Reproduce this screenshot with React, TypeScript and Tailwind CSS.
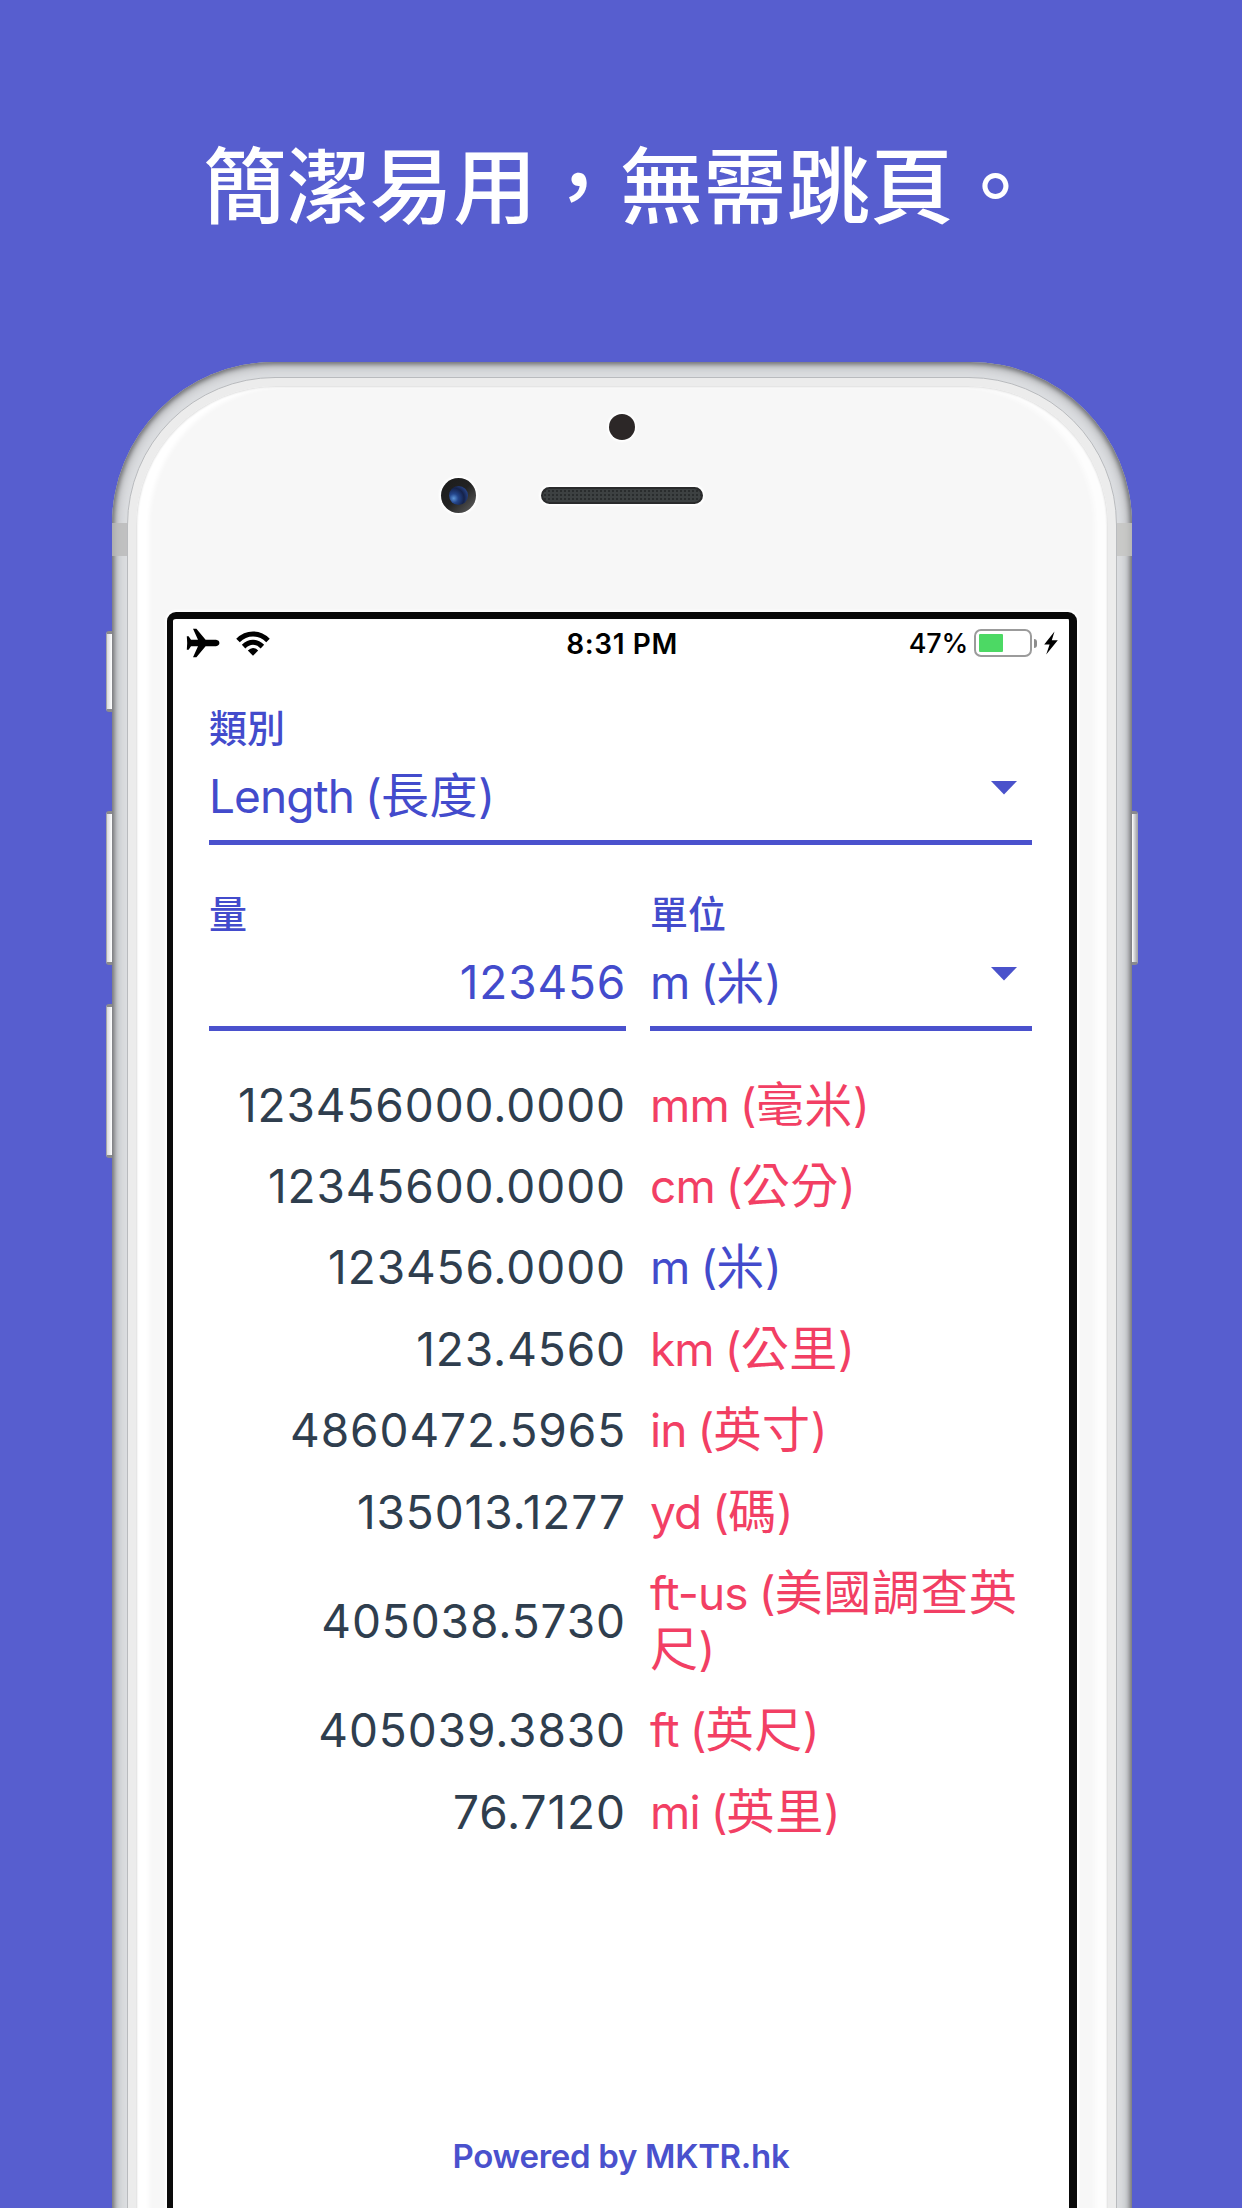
import React from "react";

const UI = "font-['Inter','Noto_Sans_CJK_TC',sans-serif]";

type Row = { value: string; unit: string; name: string; active?: boolean };

const rows: Row[] = [
  { value: "123456000.0000", unit: "mm", name: "毫米" },
  { value: "12345600.0000", unit: "cm", name: "公分" },
  { value: "123456.0000", unit: "m", name: "米", active: true },
  { value: "123.4560", unit: "km", name: "公里" },
  { value: "4860472.5965", unit: "in", name: "英寸" },
  { value: "135013.1277", unit: "yd", name: "碼" },
  { value: "405038.5730", unit: "ft-us", name: "美國調查英尺" },
  { value: "405039.3830", unit: "ft", name: "英尺" },
  { value: "76.7120", unit: "mi", name: "英里" },
];

function UnitName({ unit, name }: { unit: string; name: string }) {
  return (
    <span className="tracking-[-0.900px] [word-spacing:-1px]">
      {unit} (<span className="text-[48px] leading-[0] tracking-[0.600px]">{name}</span>)
    </span>
  );
}

function Plane() {
  return (
    <svg className="h-[30px] w-[34px]" viewBox="0 0 34 30">
      <path
        d="M7 0.8 L10.4 0.8 L19.6 11.8 L30 11.8 Q33.4 12.4 33.4 15 Q33.4 17.6 30 18.2 L19.6 18.2 L10.4 29.2 L7 29.2 L12 18.2 L5 18.2 L2.6 21.8 L0.8 21.8 L1.2 15 L0.8 8.2 L2.6 8.2 L5 11.8 L12 11.8 Z"
        fill="#000"
      />
    </svg>
  );
}

function Wifi() {
  return (
    <svg className="h-[25px] w-[34px]" viewBox="0 0 34 25">
      <g fill="none" stroke="#000" strokeWidth="5">
        <path d="M2 9.4 Q8.5 2.9 17 2.9 Q25.5 2.9 32 9.4" />
        <path d="M7.6 15.600 Q12 11.300 17 11.300 Q22 11.300 26.400 15.600" />
      </g>
      <path d="M11.800 19.600 Q14.500 17 17 17 Q19.500 17 22.200 19.600 L17 24.800 Z" fill="#000" />
    </svg>
  );
}

function Battery() {
  return (
    <div className="flex items-center">
      <div className="h-[28px] w-[58px] rounded-[7px] border-2 border-[#9b9b9b] p-[3px]">
        <div className="h-full w-6 rounded-[1px] bg-[#4cd964]" />
      </div>
      <div className="ml-[2px] h-[9px] w-[3px] rounded-r-full bg-[#8d8d8d]" />
      <svg className="ml-[7px] h-6 w-[14px]" viewBox="0 0 14 24">
        <path d="M10.500 0.400 L0.200 13.400 L5.600 13.400 L2.200 23.600 L13.800 9.200 L7.800 9.200 Z" fill="#000" />
      </svg>
    </div>
  );
}

function Caret() {
  return (
    <svg className="h-[14px] w-[26px]" viewBox="0 0 26 14">
      <path d="M0 0 H26 L13 13.500 Z" fill="#4a52cb" />
    </svg>
  );
}

function Field({ label, width, children, numeric }: { label: string; width: string; children: React.ReactNode; numeric?: boolean }) {
  return (
    <div className={`${width} text-[#434bcc]`}>
      <div className="h-[50px] text-[38px] leading-[50px] font-medium">{label}</div>
      <div className="flex h-[92px] items-start justify-between border-b-[5px] border-[#4a51cd] pt-[15px] text-[46px] leading-[56px]">
        {numeric ? (
          <span className="w-full text-right tracking-[0.800px]">{children}</span>
        ) : (
          <>
            {children}
            <span className="mt-[13px] mr-[15px]">
              <Caret />
            </span>
          </>
        )}
      </div>
    </div>
  );
}

function SideButton({ className }: { className: string }) {
  return (
    <div
      className={`absolute w-[12px] rounded-[3px] border-x border-y-[3px] border-x-[#a6a7ab] border-y-[#8a8a8e] bg-linear-to-r from-[#d8d9dc] via-white to-[#a9aaae] ${className}`}
    />
  );
}

export default function App() {
  return (
    <div lang="zh-Hant" className={`h-[2208px] w-[1242px] overflow-hidden bg-[#575ecf] ${UI}`}>
      <header className="flex h-[362px] justify-start pt-[121px] pl-[203px]">
        <h1 className="font-['Noto_Sans_CJK_TC',sans-serif] text-[83.4px] leading-[120px] font-medium whitespace-nowrap text-white">
          簡潔易用，無需跳頁。
        </h1>
      </header>

      <div className="relative ml-[112px] w-[1020px]">
        <SideButton className="top-[269px] -left-[6px] h-[81px]" />
        <SideButton className="top-[449px] -left-[6px] h-[154px]" />
        <SideButton className="top-[642px] -left-[6px] h-[154px]" />
        <SideButton className="top-[449px] -right-[6px] h-[154px]" />

        {/* metal shell */}
        <div className="relative h-[2100px] rounded-[162px] bg-[#dcdee1] p-[15px] shadow-[inset_0_0_4px_2px_#727376,inset_0_0_12px_3px_#a0a1a4]">
          <div className="absolute top-[161px] left-0 h-[33px] w-[15px] bg-[#b9b9b9]/80" />
          <div className="absolute top-[161px] right-0 h-[33px] w-[15px] bg-[#c4c4c2]/80" />

          {/* glass face */}
          <div className="h-full rounded-[148px] border border-[#b9bbbe] bg-[#ececec] p-[8px]">
            <div className="h-full rounded-[140px] bg-[#f7f7f7] shadow-[inset_0_0_2px_1px_#dedede,inset_13px_0_4px_0_#ffffff,inset_-13px_0_4px_0_#fdfdfd]">
              <div className="flex h-[226px] flex-col">
                <div className="mt-[28px] flex justify-center">
                  <div className="size-[26px] rounded-full bg-[#2c2727] shadow-[0_0_2px_2px_#ffffff]" />
                </div>
                <div className="mt-[38px] flex items-center pl-[305px]">
                  <div className="flex size-[35px] items-center justify-center rounded-full bg-linear-to-br from-[#1b1b1b] via-[#222222] to-[#666666] shadow-[0_0_2px_2px_#ffffff]">
                    <div className="size-[19px] rounded-full bg-[radial-gradient(circle_at_25%_65%,#5d96d8_0%,#24468c_24%,#15224a_55%,#27458a_80%,#15182a_100%)]" />
                  </div>
                  <div className="ml-[65px] h-[17px] w-[162px] rounded-full border-2 border-[#2a2b2c] bg-[#3d4142] bg-[radial-gradient(#292c2d_1px,transparent_1.5px)] bg-size-[4px_4px] shadow-[0_0_2px_2px_#ffffff]" />
                </div>
              </div>

              {/* display */}
              <div className="mr-[31px] ml-[31px] h-[1800px] rounded-t-[9px] border-t-[7px] border-r-[8px] border-l-[6px] border-[#0a0a0a] bg-white shadow-[0_0_2px_2px_#ffffff]">
                <div className="grid h-[48px] grid-cols-[1fr_130px_1fr] items-center pr-[11px] pl-[13px] text-black">
                  <div className="flex items-center gap-4">
                    <Plane />
                    <Wifi />
                  </div>
                  <div className="pt-px text-center text-[28px] leading-8 font-semibold tracking-[0.600px] whitespace-nowrap">8:31 PM</div>
                  <div className="flex items-center justify-end gap-[6px]">
                    <span className="pt-px text-[27px] leading-8 font-medium tracking-[-0.200px]">47%</span>
                    <Battery />
                  </div>
                </div>

                <main className="mt-[36px] ml-[36px] w-[823px]">
                  <Field label="類別" width="w-full">
                    <UnitName unit="Length" name="長度" />
                  </Field>
                  <div className="mt-[44px] flex gap-6">
                    <Field label="量" numeric width="w-[417px]">
                      123456
                    </Field>
                    <Field label="單位" width="w-[382px]">
                      <UnitName unit="m" name="米" />
                    </Field>
                  </div>
                  <div className="mt-[33px]">
                    {rows.map((r) => (
                      <div key={r.name} className="flex items-center gap-6 py-[12.700px] text-[46px] leading-[56px]">
                        <div className="w-[417px] text-right tracking-[0.900px] text-[#2f3e4e]">{r.value}</div>
                        <div className={r.active ? "w-[382px] text-[#434bcc]" : "w-[382px] text-[#f23f64]"}>
                          <UnitName unit={r.unit} name={r.name} />
                        </div>
                      </div>
                    ))}
                  </div>
                </main>

                <footer className="mt-[284px] text-center text-[33px] leading-10 font-semibold tracking-[-0.300px] text-[#4a51cd]">
                  Powered by MKTR.hk
                </footer>
              </div>
            </div>
          </div>
        </div>
      </div>
    </div>
  );
}
